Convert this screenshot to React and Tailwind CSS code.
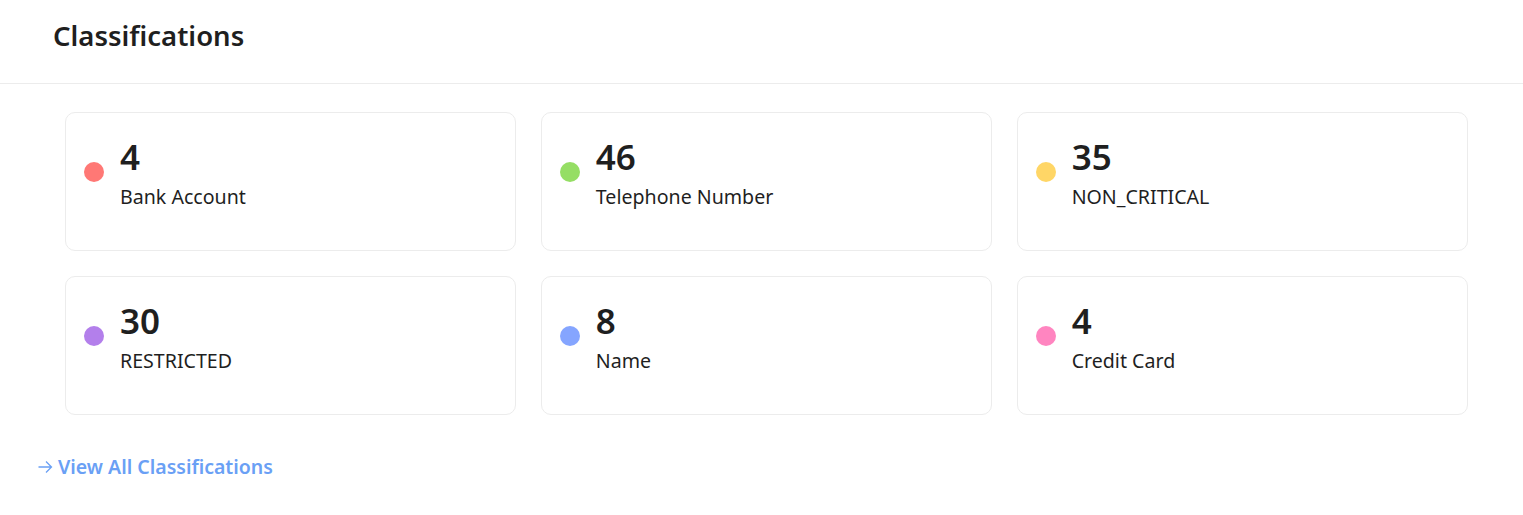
import React from "react";

const items = [
  { n: "4", label: "Bank Account", color: "bg-[#ff7875]" },
  { n: "46", label: "Telephone Number", color: "bg-[#95de64]" },
  { n: "35", label: "NON_CRITICAL", color: "bg-[#ffd666]" },
  { n: "30", label: "RESTRICTED", color: "bg-[#b37feb]" },
  { n: "8", label: "Name", color: "bg-[#85a5ff]" },
  { n: "4", label: "Credit Card", color: "bg-[#ff85c0]" },
];

export default function App() {
  return (
    <div className="w-[1523px] h-[515px] bg-white text-[#1f1f1f] font-['Noto_Sans',sans-serif]">
      <div className="h-[84px] border-b border-[#ececec] flex items-center px-[53px]">
        <h1 className="text-[27.5px] font-semibold leading-none -mt-[12px]">Classifications</h1>
      </div>
      <div className="grid grid-cols-3 gap-x-[24.5px] gap-y-[25px] pl-[65px] pr-[55px] pt-[28px]">
        {items.map((it, i) => (
          <div
            key={i}
            className="h-[139px] rounded-[10px] border border-[#ececec] flex items-start pl-[18px] pt-[23px]"
          >
            <div className="flex items-center gap-[16px]">
              <span className={`w-[20px] h-[20px] rounded-full mt-[-3px] ${it.color}`} />
              <div className="flex flex-col">
                <span className="text-[35px] font-semibold leading-[42px]">{it.n}</span>
                <span className="text-[19.6px] leading-[26px] mt-[6px]">{it.label}</span>
              </div>
            </div>
          </div>
        ))}
      </div>
      <div className="px-[38px] mt-[37px]">
        <a className="inline-flex items-center gap-[5px] text-[#6aa0f5] text-[19.5px] font-semibold cursor-pointer">
          <svg width="15" height="14" viewBox="0 0 15 14" fill="none" stroke="currentColor" strokeWidth="1.3">
            <path d="M0.5 7h13M8 1.5L13.5 7 8 12.5" />
          </svg>
          View All Classifications
        </a>
      </div>
    </div>
  );
}
